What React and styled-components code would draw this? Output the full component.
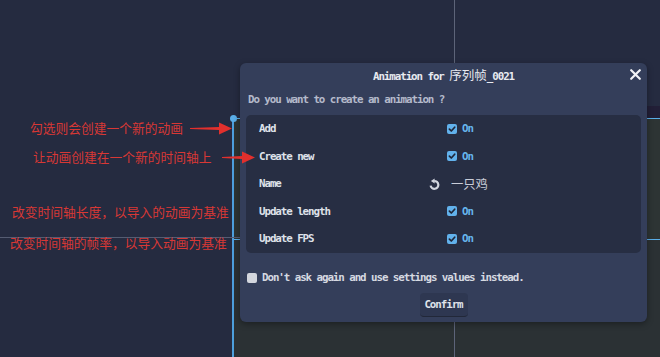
import React from 'react'
import styled, { createGlobalStyle } from 'styled-components'

const mono = `"DejaVu Sans Mono", "Noto Sans CJK SC", monospace`
const cjk = `"Noto Sans CJK SC", sans-serif`

const GlobalStyle = createGlobalStyle`
  html, body {
    margin: 0;
    padding: 0;
    background: #252b40;
  }
  * { box-sizing: border-box; }
`

const rows = [
  { label: 'Add', kind: 'check' },
  { label: 'Create new', kind: 'check' },
  { label: 'Name', kind: 'name', value: '一只鸡' },
  { label: 'Update length', kind: 'check' },
  { label: 'Update FPS', kind: 'check' },
]

const notes = [
  { text: '勾选则会创建一个新的动画', indent: 30, gap: 2, arrow: { space: 7, width: 42 } },
  { text: '让动画创建在一个新的时间轴上', indent: 33, gap: 13, arrow: { space: 10.5, width: 33 } },
  { text: '改变时间轴长度，以导入的动画为基准', indent: 12, gap: 39 },
  { text: '改变时间轴的帧率，以导入动画为基准', indent: 10, gap: 15 },
]

const Arrow = ({ width }) => {
  const h = 13
  const c = h / 2
  const head = 13
  const pts = [
    [0, c - 0.5], [width - head, c - 1.6], [width - head, c - 6],
    [width, c], [width - head, c + 6], [width - head, c + 1.6], [0, c + 0.5],
  ].map(p => p.join(',')).join(' ')
  return (
    <svg width={width} height={h} viewBox={`0 0 ${width} ${h}`}>
      <polygon points={pts} fill="#e2302d" />
    </svg>
  )
}

const CheckIcon = ({ on }) => (
  <svg width="10" height="10" viewBox="0 0 10 10">
    <rect x="0" y="0" width="10" height="10" rx="2" fill={on ? '#62b2ec' : '#d3d6de'} />
    {on && <path d="M2.4 5.1 L4.3 7 L7.7 3.2" fill="none" stroke="#1f2638" strokeWidth="1.7" strokeLinecap="round" strokeLinejoin="round" />}
  </svg>
)

const ResetIcon = () => (
  <svg width="12" height="12" viewBox="0 0 12 12">
    <path d="M2.6 7.6 A3.9 3.9 0 1 0 6.2 3" fill="none" stroke="#d2d6df" strokeWidth="2.2" />
    <polygon points="6.6,0.4 2.9,3 6.6,5.6" fill="#d2d6df" />
  </svg>
)

const CloseIcon = () => (
  <svg width="11" height="11" viewBox="0 0 11 11">
    <path d="M1.2 1.2 L9.8 9.8 M9.8 1.2 L1.2 9.8" stroke="#f2f3f6" strokeWidth="2.2" strokeLinecap="round" />
  </svg>
)

export default function App() {
  return (
    <>
      <GlobalStyle />
      <Editor>
        <Corner />
        <TopLane>
          <LaneHeader />
        </TopLane>
        <Notes>
          {notes.map(n => (
            <Note key={n.text} $indent={n.indent} $gap={n.gap}>
              <NoteText>{n.text}</NoteText>
              {n.arrow && (
                <ArrowSlot $space={n.arrow.space}>
                  <Arrow width={n.arrow.width} />
                </ArrowSlot>
              )}
            </Note>
          ))}
        </Notes>
        <Track>
          <Lane />
        </Track>

        <GuideV />
        <GuideH />

        <Dialog>
          <TitleBar>
            <Title>
              Animation for <TitleCjk>序列帧</TitleCjk>_0021
            </Title>
            <CloseButton><CloseIcon /></CloseButton>
          </TitleBar>
          <Question>Do you want to create an animation ?</Question>
          <Panel>
            {rows.map(r => (
              <Row key={r.label}>
                <Label>{r.label}</Label>
                <Value>
                  <IconSlot>{r.kind === 'name' && <ResetIcon />}</IconSlot>
                  {r.kind === 'check' ? (
                    <>
                      <CheckIcon on />
                      <OnText>On</OnText>
                    </>
                  ) : (
                    <NameText>{r.value}</NameText>
                  )}
                </Value>
              </Row>
            ))}
          </Panel>
          <DontAsk>
            <CheckIcon on={false} />
            <DontAskText>Don't ask again and use settings values instead.</DontAskText>
          </DontAsk>
          <Confirm>Confirm</Confirm>
        </Dialog>
      </Editor>
    </>
  )
}

const Editor = styled.div`
  position: relative;
  width: 660px;
  height: 357px;
  overflow: hidden;
  background: #252b40;
  display: grid;
  grid-template-columns: 232px 1fr;
  grid-template-rows: 118px 1fr;
`

const Corner = styled.div``

const TopLane = styled.div`
  display: flex;
  flex-direction: column;
  justify-content: flex-end;
  padding-left: 8px;
`

const LaneHeader = styled.div`
  height: 12px;
  background: #221f37;
`

const Notes = styled.div`
  position: relative;
  z-index: 3;
  display: flex;
  flex-direction: column;
  overflow: visible;
`

const Note = styled.div`
  display: flex;
  align-items: center;
  height: 16px;
  margin-top: ${p => p.$gap}px;
  padding-left: ${p => p.$indent}px;
  white-space: nowrap;
`

const NoteText = styled.span`
  font-family: ${cjk};
  font-size: 12.75px;
  line-height: 16px;
  color: #d83835;
`

const ArrowSlot = styled.span`
  display: flex;
  margin-left: ${p => p.$space}px;
`

const Track = styled.div`
  position: relative;
  background: #2b3134;
  border-left: 2px solid #4d9fdc;
  border-top: 1px solid #5aaee8;
  display: flex;
  flex-direction: column;

  &::before {
    content: '';
    position: absolute;
    left: -4.5px;
    top: -4px;
    width: 7px;
    height: 7px;
    border-radius: 50%;
    background: #5aaee8;
  }
`

const Lane = styled.div`
  height: 121px;
  background: #2d3434;
  border-bottom: 1px solid #5aaee8;
`

const GuideV = styled.div`
  position: absolute;
  left: 454px;
  top: 0;
  width: 1px;
  height: 100%;
  background: #5d6479;
  z-index: 1;
`

const GuideH = styled.div`
  position: absolute;
  left: 0;
  top: 237px;
  width: 240px;
  height: 1px;
  background: #555c72;
  z-index: 1;
`

const Dialog = styled.section`
  position: absolute;
  left: 240px;
  top: 63px;
  width: 407px;
  height: 259px;
  z-index: 2;
  display: flex;
  flex-direction: column;
  padding: 0 6px 5px;
  background: #343e5a;
  border-radius: 6px;
  box-shadow: 0 2px 6px rgba(0, 0, 0, 0.35);
  font-family: ${mono};
  font-weight: bold;
  font-size: 10.8px;
  letter-spacing: -1.05px;
`

const TitleBar = styled.header`
  height: 22px;
  display: grid;
  grid-template-columns: 1fr auto 1fr;
  align-items: center;
`

const Title = styled.h1`
  grid-column: 2;
  margin: 0;
  font: inherit;
  color: #e8eaf0;
  white-space: nowrap;
`

const TitleCjk = styled.span`
  font-family: ${cjk};
  font-weight: normal;
  font-size: 12.5px;
  letter-spacing: 0;
`

const CloseButton = styled.button`
  justify-self: end;
  display: flex;
  padding: 0;
  border: 0;
  background: none;
  margin-top: 1px;
`

const Question = styled.p`
  margin: 8px 0 0;
  padding-left: 2px;
  line-height: 14px;
  color: #b4bacb;
`

const Panel = styled.div`
  margin-top: 8px;
  display: grid;
  grid-auto-rows: 27.5px;
  background: #272e43;
  border-radius: 5px;
`

const Row = styled.div`
  display: grid;
  grid-template-columns: 169px 1fr;
  align-items: center;
  padding-left: 13px;
`

const Label = styled.span`
  color: #dfe2ea;
`

const Value = styled.span`
  display: flex;
  align-items: center;
`

const IconSlot = styled.span`
  display: flex;
  width: 19px;
  flex: none;
`

const OnText = styled.span`
  margin-left: 5px;
  color: #66b6ef;
`

const NameText = styled.span`
  padding-left: 4px;
  font-family: ${cjk};
  font-weight: normal;
  font-size: 12.3px;
  letter-spacing: 0;
  color: #c9cdd8;
`

const DontAsk = styled.label`
  margin-top: 18.5px;
  padding-left: 1px;
  height: 14px;
  display: flex;
  align-items: center;
  gap: 5px;
  color: #d6d9e1;
`

const DontAskText = styled.span`
  line-height: 14px;
`

const Confirm = styled.button`
  align-self: center;
  margin-top: 8px;
  width: 48px;
  height: 24px;
  padding: 0;
  border: 0;
  border-bottom: 1px solid #222839;
  border-radius: 4px;
  background: #2e3751;
  color: #dfe2ea;
  font: inherit;
  letter-spacing: inherit;
`
